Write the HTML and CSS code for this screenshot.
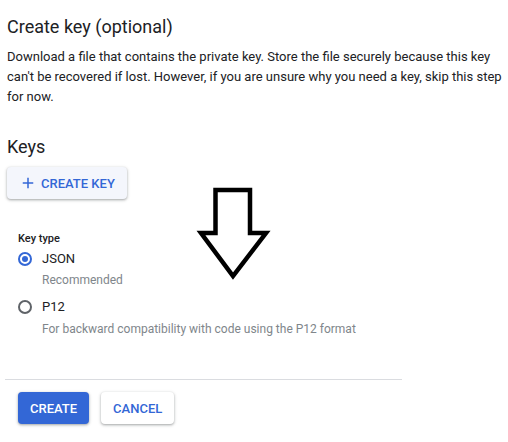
FILE: index.html
```html
<!DOCTYPE html>
<html>
<head>
<meta charset="utf-8">
<link rel="stylesheet" href="styles.css">
</head>
<body>
<div class="page">
  <h2 class="title">Create key (optional)</h2>
  <p class="desc">Download a file that contains the private key. Store the file securely because this key can't be recovered if lost. However, if you are unsure why you need a key, skip this step for now.</p>
  <h2 class="keys">Keys</h2>
  <button class="btn-create-key">
    <svg class="plus" viewBox="0 0 24 24" width="18" height="18"><path d="M19 13h-6v6h-2v-6H5v-2h6V5h2v6h6v2z" fill="#3367d6"/></svg>
    <span>CREATE KEY</span>
  </button>
  <div class="form">
    <div class="label">Key type</div>
    <label class="radio-row">
      <span class="radio checked"></span>
      <span class="radio-text">JSON</span>
    </label>
    <div class="hint">Recommended</div>
    <label class="radio-row second">
      <span class="radio"></span>
      <span class="radio-text">P12</span>
    </label>
    <div class="hint last">For backward compatibility with code using the P12 format</div>
  </div>
  <div class="divider"></div>
  <div class="actions">
    <button class="btn primary">CREATE</button>
    <button class="btn secondary">CANCEL</button>
  </div>
  <svg class="arrow" width="80" height="100" viewBox="195 184 80 100">
    <polygon points="215.5,190 250,190 250,233 266,233 233,276 201,233 215.5,233" fill="none" stroke="#000" stroke-width="4.5" stroke-linejoin="miter"/>
  </svg>
</div>
</body>
</html>
```

FILE: styles.css
```css
* { box-sizing: border-box; }
html, body { margin: 0; padding: 0; background: #fff; }
body { font-family: Roboto, "Noto Sans", Arial, sans-serif; color: #202124; }
.page { position: relative; padding: 15px 0 0 7px; width: 508px; height: 442px; overflow: hidden; }
.title { font-size: 18px; font-weight: 400; line-height: 24px; margin: 0; color: #202124; }
.desc { font-size: 13px; line-height: 20px; margin: 8px 0 0; color: #202124; width: 500px; }
.keys { font-size: 18px; font-weight: 400; line-height: 24px; margin: 28px 0 0; color: #202124; }
.btn-create-key {
  display: flex; align-items: center; gap: 4px;
  margin-top: 8px; height: 32px; padding: 0 12px;
  background: #f4f6fc; border: none; border-radius: 4px;
  box-shadow: 0 1px 2px rgba(60,64,67,.3), 0 1px 3px 1px rgba(60,64,67,.15);
  font-family: inherit; font-size: 13px; font-weight: 500; color: #3367d6;
}
.plus { display: block; }
.form { padding-left: 11px; margin-top: 32px; }
.label { font-size: 11px; line-height: 16px; font-weight: 500; color: #202124; }
.radio-row { display: flex; align-items: center; height: 20px; margin-top: 2px; }
.radio-row.second { margin-top: 9px; }
.radio { width: 14px; height: 14px; border-radius: 50%; border: 2px solid #5f6368; margin-right: 10px; display: flex; align-items: center; justify-content: center; }
.radio.checked { border-color: #3367d6; }
.radio.checked::after { content: ""; width: 6px; height: 6px; border-radius: 50%; background: #3367d6; }
.radio-text { font-size: 13px; line-height: 20px; }
.hint { font-size: 12px; line-height: 16px; color: #80868b; margin: 3px 0 0 24px; }
.hint.last { margin-top: 4px; }
.divider { width: 397px; height: 1px; background: #dadce0; margin: 42px 0 0 -2px; }
.actions { display: flex; gap: 12px; padding-left: 11px; margin-top: 12px; }
.btn { height: 32px; padding: 0 12px; border: none; border-radius: 4px; font-family: inherit; font-size: 13px; font-weight: 500; }
.primary { background: #3367d6; color: #fff; box-shadow: 0 1px 2px rgba(60,64,67,.3), 0 1px 3px 1px rgba(60,64,67,.15); }
.secondary { background: #fff; color: #3367d6; box-shadow: 0 1px 2px rgba(60,64,67,.3), 0 1px 3px 1px rgba(60,64,67,.15); }
.arrow { position: absolute; left: 195px; top: 184px; }
```
